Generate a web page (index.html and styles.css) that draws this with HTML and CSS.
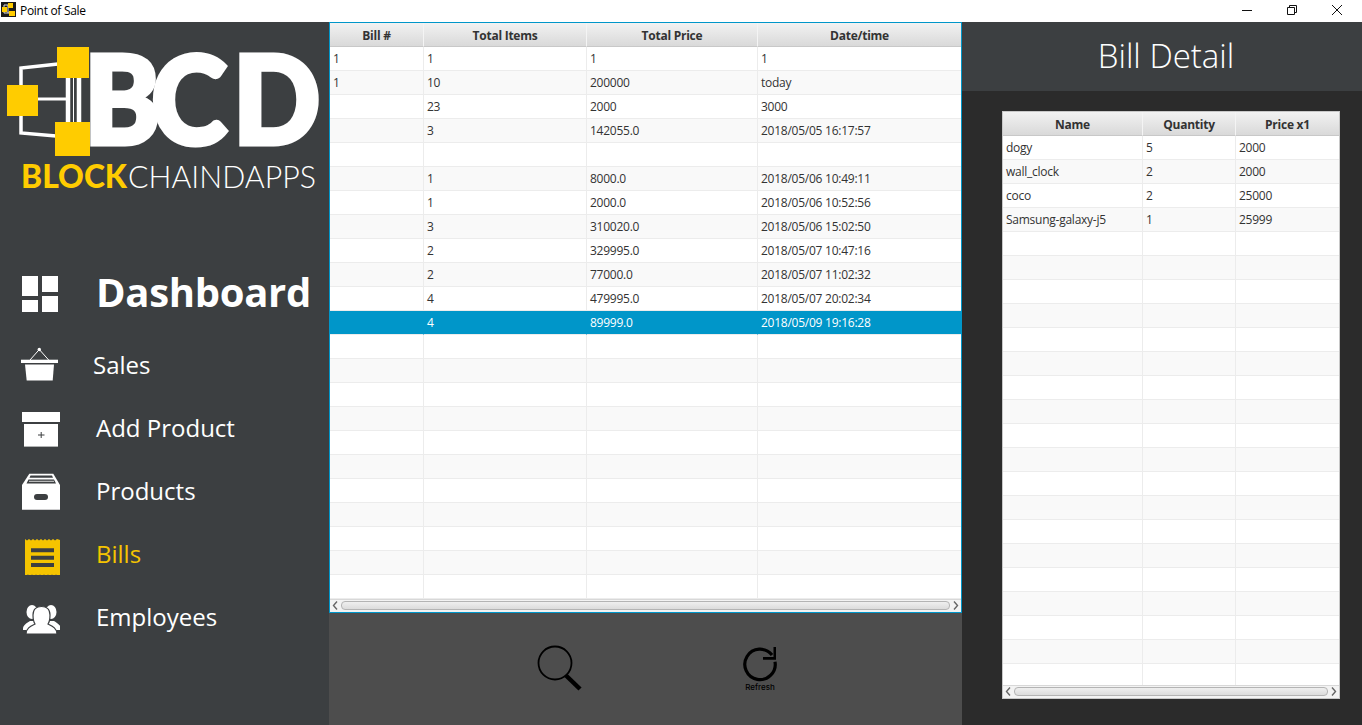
FILE: index.html
```html
<!DOCTYPE html>
<html lang="en">
<head>
<meta charset="utf-8">
<title>Point of Sale</title>
<link rel="stylesheet" href="styles.css">
</head>
<body>
<div class="app">
  <header class="titlebar">
    <svg class="app-icon" width="15" height="15" viewBox="0 0 15 15"><rect width="15" height="15" fill="#1a1a1a"/><path d="M3 3H9M3 3V11H9M7 3V11" stroke="#ddd" fill="none"/><rect x="7" y="1" width="5" height="5" fill="#fc0"/><rect x="1" y="5" width="5" height="5" fill="#fc0"/><rect x="8" y="9" width="6" height="5" fill="#fc0"/></svg>
    <span class="app-title">Point of Sale</span>
    <div class="window-controls">
      <svg width="12" height="12" viewBox="0 0 12 12"><path d="M1 6.500H11" stroke="#111"/></svg>
      <svg width="12" height="12" viewBox="0 0 12 12"><path d="M1.500 3.500H8.500V10.500H1.500ZM3.500 3.500V1.500H10.500V8.500H8.500" stroke="#111" fill="none"/></svg>
      <svg width="12" height="12" viewBox="0 0 12 12"><path d="M1 1L11 11M11 1L1 11" stroke="#111" fill="none"/></svg>
    </div>
  </header>
  <div class="workspace">
    <aside class="sidebar">
      <svg class="logo" width="329" height="228" viewBox="0 0 329 228">
        <g fill="none" stroke="#fff">
          <path d="M58 42L21 46V111L56 114" stroke-width="3.500"/>
          <path d="M38 77H67" stroke-width="3"/>
          <path d="M68 56V100M79 56V100" stroke-width="4.500"/>
          <path d="M73.500 56V100" stroke-width="1"/>
        </g>
        <text class="logo-bcd" x="89.500 161 248" y="122" transform="scale(.94 1)">BCD</text>
        <rect class="logo-sq" x="57" y="25" width="32" height="31"/>
        <rect class="logo-sq" x="7" y="63" width="31" height="31"/>
        <rect class="logo-sq" x="55" y="100" width="35" height="34"/>
        <text class="logo-block" x="21" y="166" textLength="106" lengthAdjust="spacingAndGlyphs">BLOCK</text>
        <text class="logo-dapps" x="128" y="166" textLength="188" lengthAdjust="spacingAndGlyphs">CHAINDAPPS</text>
      </svg>
      <nav class="nav">
        <a class="nav-item nav-dashboard">
          <svg width="40" height="40" viewBox="0 0 40 40" fill="#fff"><rect x="2" y="4" width="16" height="20"/><rect x="2" y="28" width="16" height="12"/><rect x="22" y="4" width="16" height="16"/><rect x="22" y="24" width="16" height="16"/></svg>
          <span class="nav-label">Dashboard</span>
        </a>
        <a class="nav-item nav-sales">
          <svg width="40" height="40" viewBox="0 0 40 40" fill="#fff"><path d="M10 14L19.300 3.500L28.700 14" fill="none" stroke="#fff" stroke-width="1"/><circle cx="19.300" cy="3.500" r="1.700"/><rect x="1" y="13.700" width="37" height="3.300"/><path d="M5 18.500H34L32.700 34.500H6.700Z"/></svg>
          <span class="nav-label">Sales</span>
        </a>
        <a class="nav-item">
          <svg width="40" height="40" viewBox="0 0 40 40" fill="#fff"><rect x="2" y="3" width="38" height="10"/><rect x="4" y="15" width="34" height="22.600"/><path d="M18 26H24.500M21.200 23V29" stroke="#3c3f41" fill="none"/></svg>
          <span class="nav-label">Add Product</span>
        </a>
        <a class="nav-item">
          <svg width="40" height="40" viewBox="0 0 40 40" fill="#fff"><path d="M9.300 1.700H33.300L40 13V37.700H2V13Z"/><path d="M10.500 3.500H32L33 5.800H9.500ZM8.500 7.500H34L36 11.500H6.500Z" fill="#3c3f41"/><path d="M9 9.300H34" stroke="#fff" stroke-width=".8"/><rect x="14" y="22" width="14" height="6" rx="3" fill="#3c3f41"/></svg>
          <span class="nav-label">Products</span>
        </a>
        <a class="nav-item nav-active">
          <svg width="40" height="40" viewBox="0 0 40 40"><path d="M5 4L7 5.500L9 4L11 5.500L13 4L15 5.500L17 4L19 5.500L21 4L23 5.500L25 4L27 5.500L29 4L31 5.500L33 4L35 5.500L37 4L40 5V40L38 41L36 39.500L34 41L32 39.500L30 41L28 39.500L26 41L24 39.500L22 41L20 39.500L18 41L16 39.500L14 41L12 39.500L10 41L8 39.500L5 41Z" fill="#f5c400"/><path d="M11 13.300H34V17.300H11ZM11 20.700H34V24.700H11ZM11 28H34V32H11Z" fill="#3c3f41"/></svg>
          <span class="nav-label">Bills</span>
        </a>
        <a class="nav-item">
          <svg width="40" height="40" viewBox="0 0 40 40" fill="#fff"><ellipse cx="12" cy="14" rx="5.500" ry="7"/><ellipse cx="31" cy="14" rx="5.500" ry="7"/><path d="M3 31C3 27 7 25 10 23H14L20 32H3ZM41 31C41 27 37 25 34 23H30L24 32H41Z"/><path d="M6 36C6 30 11 28 15 26C13 23 13 20 13 17C13 11 17 8.500 21.500 8.500C26 8.500 30 11 30 17C30 20 30 23 28 26C32 28 37 30 37 36Z" stroke="#3c3f41" stroke-width="1.200"/></svg>
          <span class="nav-label">Employees</span>
        </a>
      </nav>
    </aside>

    <main class="center">
      <div class="bills-panel">
        <div class="table-clip">
          <table class="grid bills-grid">
            <colgroup><col class="c-bill"><col class="c-items"><col class="c-price"><col class="c-date"></colgroup>
            <thead><tr><th>Bill #</th><th>Total Items</th><th>Total Price</th><th>Date/time</th></tr></thead>
            <tbody>
              <tr><td>1</td><td>1</td><td>1</td><td>1</td></tr>
              <tr><td>1</td><td>10</td><td>200000</td><td>today</td></tr>
              <tr><td></td><td>23</td><td>2000</td><td>3000</td></tr>
              <tr><td></td><td>3</td><td>142055.0</td><td>2018/05/05 16:17:57</td></tr>
              <tr><td></td><td></td><td></td><td></td></tr>
              <tr><td></td><td>1</td><td>8000.0</td><td>2018/05/06 10:49:11</td></tr>
              <tr><td></td><td>1</td><td>2000.0</td><td>2018/05/06 10:52:56</td></tr>
              <tr><td></td><td>3</td><td>310020.0</td><td>2018/05/06 15:02:50</td></tr>
              <tr><td></td><td>2</td><td>329995.0</td><td>2018/05/07 10:47:16</td></tr>
              <tr><td></td><td>2</td><td>77000.0</td><td>2018/05/07 11:02:32</td></tr>
              <tr><td></td><td>4</td><td>479995.0</td><td>2018/05/07 20:02:34</td></tr>
              <tr class="selected"><td></td><td>4</td><td>89999.0</td><td>2018/05/09 19:16:28</td></tr>
              <tr><td></td><td></td><td></td><td></td></tr>
              <tr><td></td><td></td><td></td><td></td></tr>
              <tr><td></td><td></td><td></td><td></td></tr>
              <tr><td></td><td></td><td></td><td></td></tr>
              <tr><td></td><td></td><td></td><td></td></tr>
              <tr><td></td><td></td><td></td><td></td></tr>
              <tr><td></td><td></td><td></td><td></td></tr>
              <tr><td></td><td></td><td></td><td></td></tr>
              <tr><td></td><td></td><td></td><td></td></tr>
              <tr><td></td><td></td><td></td><td></td></tr>
              <tr><td></td><td></td><td></td><td></td></tr>
            </tbody>
          </table>
        </div>
        <div class="hscroll">
          <svg width="6" height="9" viewBox="0 0 6 9"><path d="M5 .5L1.500 4.500L5 8.500" fill="none" stroke="#666" stroke-width="1.400"/></svg>
          <div class="thumb"></div>
          <svg width="6" height="9" viewBox="0 0 6 9"><path d="M1 .5L4.500 4.500L1 8.500" fill="none" stroke="#666" stroke-width="1.400"/></svg>
        </div>
      </div>
      <div class="toolbar">
        <svg width="48" height="50" viewBox="0 0 48 50"><circle cx="19" cy="20" r="16.500" fill="none" stroke="#000" stroke-width="1.800"/><path d="M30 32.500L44 46" stroke="#000" stroke-width="4.500"/></svg>
        <div class="refresh">
          <svg width="36" height="36" viewBox="0 0 36 36"><path d="M30 9A15.200 15.200 0 1 0 33 15.700" fill="none" stroke="#000" stroke-width="3.200"/><path d="M34 1V13.800H21V11H31.500V1Z" fill="#000"/></svg>
          <span class="refresh-label">Refresh</span>
        </div>
      </div>
    </main>

    <section class="detail">
      <h1 class="detail-title">Bill Detail</h1>
      <div class="detail-body">
        <div class="detail-card">
          <div class="table-clip">
            <table class="grid detail-grid">
              <colgroup><col class="c-name"><col class="c-qty"><col class="c-unit"></colgroup>
              <thead><tr><th>Name</th><th>Quantity</th><th>Price x1</th></tr></thead>
              <tbody>
                <tr><td>dogy</td><td>5</td><td>2000</td></tr>
                <tr><td>wall_clock</td><td>2</td><td>2000</td></tr>
                <tr><td>coco</td><td>2</td><td>25000</td></tr>
                <tr><td>Samsung-galaxy-j5</td><td>1</td><td>25999</td></tr>
                <tr><td></td><td></td><td></td></tr>
                <tr><td></td><td></td><td></td></tr>
                <tr><td></td><td></td><td></td></tr>
                <tr><td></td><td></td><td></td></tr>
                <tr><td></td><td></td><td></td></tr>
                <tr><td></td><td></td><td></td></tr>
                <tr><td></td><td></td><td></td></tr>
                <tr><td></td><td></td><td></td></tr>
                <tr><td></td><td></td><td></td></tr>
                <tr><td></td><td></td><td></td></tr>
                <tr><td></td><td></td><td></td></tr>
                <tr><td></td><td></td><td></td></tr>
                <tr><td></td><td></td><td></td></tr>
                <tr><td></td><td></td><td></td></tr>
                <tr><td></td><td></td><td></td></tr>
                <tr><td></td><td></td><td></td></tr>
                <tr><td></td><td></td><td></td></tr>
                <tr><td></td><td></td><td></td></tr>
                <tr><td></td><td></td><td></td></tr>
              </tbody>
            </table>
          </div>
          <div class="hscroll">
            <svg width="6" height="9" viewBox="0 0 6 9"><path d="M5 .5L1.500 4.500L5 8.500" fill="none" stroke="#666" stroke-width="1.400"/></svg>
            <div class="thumb"></div>
            <svg width="6" height="9" viewBox="0 0 6 9"><path d="M1 .5L4.500 4.500L1 8.500" fill="none" stroke="#666" stroke-width="1.400"/></svg>
          </div>
        </div>
      </div>
    </section>
  </div>
</div>
</body>
</html>
```
FILE: styles.css
```css
* { box-sizing: border-box; }
html, body { margin: 0; padding: 0; }
body { font-family: "Open Sans", "Noto Sans", sans-serif; overflow: hidden; background: #fff; }
.app { width: 1362px; height: 725px; display: flex; flex-direction: column; overflow: hidden; }

.titlebar { height: 22px; flex: none; display: flex; align-items: center; background: #fff; }
.app-icon { margin-left: 1px; margin-bottom: 3px; flex: none; }
.app-title { margin-left: 4px; font-size: 12px; letter-spacing: -.3px; color: #000; margin-bottom: 2px; }
.window-controls { margin-left: auto; margin-right: 19px; display: flex; gap: 33px; margin-bottom: 3px; }

.workspace { flex: 1; display: flex; min-height: 0; }

.sidebar { width: 329px; flex: none; background: #3c3f41; display: flex; flex-direction: column; }
.logo { display: block; flex: none; }
.logo-sq { fill: #fc0; }
.logo-bcd { font-family: "Lato", sans-serif; font-weight: 900; font-size: 122px; fill: #fff; stroke: #fff; stroke-width: 5px; }
.logo-block { font-family: "Lato", sans-serif; font-weight: 900; font-size: 32px; fill: #fc0; }
.logo-dapps { font-family: "Lato", sans-serif; font-weight: 300; font-size: 32px; fill: #fff; }

.nav { display: flex; flex-direction: column; }
.nav-item { height: 63px; display: flex; align-items: center; padding-left: 20px; gap: 36px; color: #fff; }
.nav-item svg { flex: none; }
.nav-label { font-size: 24px; line-height: 34px; padding-bottom: 1px; }
.nav-dashboard { height: 84px; gap: 36px; }
.nav-dashboard .nav-label { font-size: 40px; font-weight: 700; line-height: 50px; letter-spacing: -.3px; padding-bottom: 0; }
.nav-sales { gap: 33px; }
.nav-active { color: #f5c400; }

.center { width: 633px; flex: none; display: flex; flex-direction: column; background: #4d4d4d; }
.bills-panel { height: 591px; flex: none; border: 1px solid #0096c9; background: #fff; display: flex; flex-direction: column; }
.table-clip { flex: 1; min-height: 0; overflow: hidden; background: #fff; }

.grid { border-collapse: separate; border-spacing: 0; table-layout: fixed; width: 100%; font-size: 12px; letter-spacing: -.25px; color: #333; }
.grid th { height: 24px; padding: 2px 0 0; font-weight: 700; text-align: center; background: linear-gradient(#f2f2f2, #d9d9d9); border-right: 1px solid #f4f4f4; border-bottom: 1px solid #c8c8c8; color: #333; }
.grid td { height: 24px; padding: 0 3px; border-right: 1px solid #ececec; border-bottom: 1px solid #ececec; white-space: nowrap; overflow: hidden; }
.grid th:last-child, .grid td:last-child { border-right: 0; }
.grid tbody tr:nth-child(even) td { background: #f9f9f9; }
.grid tbody tr.selected td { background: #0096c9; color: #fff; border-right-color: #0096c9; }

.c-bill { width: 94px; }
.c-items { width: 163px; }
.c-price { width: 171px; }
.c-date { width: 203px; }
.c-name { width: 140px; }
.c-qty { width: 93px; }
.c-unit { width: 103px; }

.hscroll { height: 13px; flex: none; display: flex; align-items: center; gap: 3px; padding: 0 2px; background: linear-gradient(#d8d8d8 0 1px, #f3f3f3 1px); }
.hscroll svg { flex: none; }
.thumb { flex: 1; height: 9px; border: 1px solid #b4b4b4; border-radius: 4px; background: linear-gradient(#efefef, #dcdcdc); }

.toolbar { flex: 1; display: flex; align-items: flex-start; padding: 30px 0 0 207px; gap: 158px; }
.refresh { display: flex; flex-direction: column; align-items: center; width: 36px; margin-top: 3px; }
.refresh-label { font-size: 8px; line-height: 9px; color: #000; font-family: "Inter", sans-serif; font-weight: 500; margin-top: 1px; white-space: nowrap; }

.detail { flex: 1; min-width: 0; display: flex; flex-direction: column; background: #2b2b2b; }
.detail-title { height: 69px; margin: 0; flex: none; background: #3c3f41; color: #fff; font-weight: 300; font-size: 33px; line-height: 67px; text-align: center; padding-left: 8px; }
.detail-body { flex: 1; min-height: 0; padding: 20px 22px 26px 40px; display: flex; }
.detail-card { flex: 1; display: flex; flex-direction: column; border: 1px solid #c8c8c8; background: #fff; min-height: 0; }
```
